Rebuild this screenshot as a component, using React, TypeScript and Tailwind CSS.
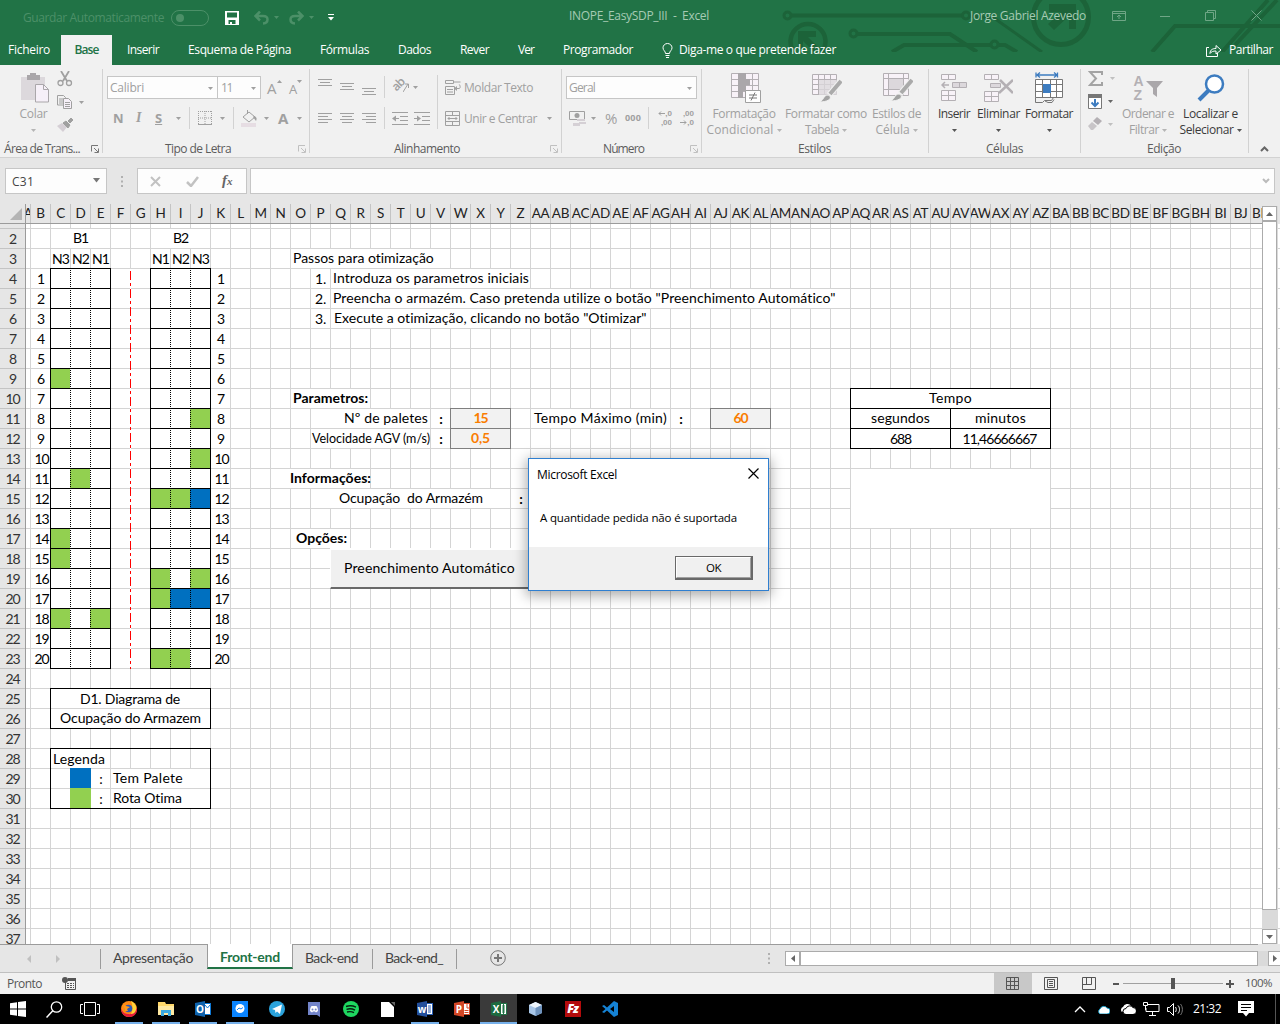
import React, { useLayoutEffect, useRef, useState, type ReactNode } from "react";

/* Text set to a given width by spreading the difference over its letters. */
function Fit({ w, t, className = "" }: { w: number; t: string; className?: string }) {
  const ref = useRef<HTMLSpanElement>(null);
  const [ls, setLs] = useState(0);
  useLayoutEffect(() => {
    if (ref.current) setLs((w - ref.current.getBoundingClientRect().width) / t.length);
  }, [w, t]);
  return (
    <span className={"block shrink-0 whitespace-pre " + className} style={{ width: w, letterSpacing: ls }}>
      <span ref={ref}>{t}</span>
    </span>
  );
}

function S({ w, h, c = "", children }: { w: number; h: number; c?: string; children: ReactNode }) {
  return (
    <svg width={w} height={h} viewBox={`0 0 ${w} ${h}`} fill="none" stroke="currentColor" className={"block shrink-0 " + c}>
      {children}
    </svg>
  );
}

const Arrow = ({ c = "" }: { c?: string }) => (
  <S w={5} h={3} c={c}><path d="M0 0h5L2.500 3z" fill="currentColor" stroke="none" /></S>
);
const Launcher = ({ c = "" }: { c?: string }) => (
  <S w={8} h={8} c={c}><path d="M.5 6.500V.5H7M3 3l4 4M7.500 3.500v4H3.500" /></S>
);
const Sep = ({ c = "" }: { c?: string }) => <div className={"w-px shrink-0 bg-[#d2d2d2] " + c} />;

/* ---------- title bar ---------- */
function TitleBar() {
  return (
    <div className="flex h-[35px] items-center text-[#a6cbb4]">
      <Fit w={141} t="Guardar Automaticamente" className="ml-[23px] text-[#4c9068]" />
      <div className="ml-[7px] flex h-4 w-[38px] items-center rounded-full border border-[#4c9068] pl-1">
        <div className="size-2 rounded-full bg-[#4c9068]" />
      </div>
      <S w={14} h={14} c="ml-4 text-white"><path d="M0 0h14v14H0zM2 1.500v5h10v-5zM3.500 9v4H5v-2h2v2h3.500V9z" fill="#fff" fillRule="evenodd" stroke="none" /></S>
      <S w={15} h={14} c="ml-[15px] text-[#4c9068]"><path d="M2 5h7c6 0 6 7 0 7.500M6 .5L1.500 5 6 9.500" strokeWidth="2.500" /></S>
      <Arrow c="ml-[5px] text-[#4c9068]" />
      <S w={15} h={14} c="ml-[10px] text-[#4c9068]"><path d="M13 5H6c-6 0-6 7 0 7.500M9 .5L13.500 5 9 9.500" strokeWidth="2.500" /></S>
      <Arrow c="ml-[5px] text-[#4c9068]" />
      <S w={6} h={7} c="ml-[14px] text-white"><path d="M0 .5h6" /><path d="M0 3h6L3 6.500z" fill="currentColor" stroke="none" /></S>
      <Fit w={140} t="INOPE_EasySDP_III  -  Excel" className="ml-[235px] -mt-[3px]" />
      <Fit w={116} t="Jorge Gabriel Azevedo" className="ml-[261px] -mt-[3px]" />
      <div className="-mt-1 flex items-center text-[#6fa686]">
        <S w={14} h={10} c="ml-[26px]"><path d="M.5.500h13v9H.5zM.5 2.500h13M7 8V4M5 6l2-2 2 2" /></S>
        <S w={10} h={10} c="ml-[34px]"><path d="M0 5.500h10" /></S>
        <S w={11} h={11} c="ml-[35px]"><path d="M.5 2.500h8v8h-8zM2.500 2.500v-2h8v8h-2" /></S>
        <S w={11} h={11} c="ml-[35px]"><path d="M.5.5l10 10M10.500.5l-10 10" /></S>
      </div>
    </div>
  );
}

function Circuit() {
  return (
    <svg width="500" height="52" viewBox="780 0 500 52" fill="none" stroke="#1c6339" strokeWidth="4" className="absolute right-0 top-0">
      <circle cx="787.500" cy="15.500" r="3.500" strokeWidth="3" /><path d="M792 15.500h170" />
      <circle cx="966" cy="15.500" r="3.500" strokeWidth="3" /><path d="M994 18l48 34M970 16l24 2" strokeWidth="3" />
      <path d="M794 52a17.500 17.500 0 1 1 28 0" strokeWidth="4.500" />
      <path d="M798 31h18v6h-8l10 10-4 5-11-11v8h-5z" fill="#1c6339" stroke="none" />
      <circle cx="853.500" cy="33.500" r="3.500" strokeWidth="3" /><path d="M858 34h92l27 18" />
      <path d="M892 52l12-7h86M999 45h6l12 7" /><circle cx="994.500" cy="44.500" r="3.500" strokeWidth="3" />
      <circle cx="1061" cy="17" r="27.500" strokeWidth="5" />
      <path d="M1049 4h27v25h-7V16l-15 14-6-6 13-12h-12z" fill="#1c6339" stroke="none" />
      <path d="M1152 52l23-26h105M1222 52l46-52M1235 45l42-45" />
    </svg>
  );
}

function TabBar() {
  const tabs: [string, number, number][] = [
    ["Inserir", 32, 15], ["Esquema de Página", 103, 29], ["Fórmulas", 49, 29], ["Dados", 33, 29],
    ["Rever", 29, 29], ["Ver", 16, 29], ["Programador", 70, 29],
  ];
  return (
    <div className="flex h-[30px] items-center text-white">
      <Fit w={42} t="Ficheiro" className="ml-2" />
      <div className="ml-[11px] flex h-full w-[51px] items-center justify-center bg-[#f1f1f1] text-[#217346]">
        <Fit w={24} t="Base" className="font-semibold" />
      </div>
      {tabs.map(([t, w, m]) => (
        <span key={t} style={{ marginLeft: m }}><Fit w={w} t={t} /></span>
      ))}
      <S w={11} h={15} c="ml-[29px]"><path d="M3.500 10.500C3.500 8 1 7.500 1 4.800a4.500 4.300 0 0 1 9 0c0 2.700-2.500 3.200-2.500 5.700zM3.500 12.500h4M4 14.500h3" /></S>
      <Fit w={157} t="Diga-me o que pretende fazer" className="ml-[6px]" />
      <S w={16} h={13} c="ml-[370px]"><path d="M3 3.500H.5v9h11V9M4 9.500c0-4 3-5 6-5V1.500L15 6l-5 4V7C7 7 5.500 7.500 4 9.500z" /></S>
      <Fit w={44} t="Partilhar" className="ml-[7px]" />
    </div>
  );
}

/* ---------- ribbon ---------- */
function Group({ w, label, lw, ml, launcher, children }: { w: number; label: string; lw: number; ml: number; launcher?: string; children: ReactNode }) {
  return (
    <div className="relative flex shrink-0 flex-col" style={{ width: w }}>
      <div className="flex h-[76px]">{children}</div>
      <div className="flex h-[17px] items-center text-[#5c5c5c]">
        <span style={{ marginLeft: ml }}><Fit w={lw} t={label} /></span>
        {launcher && <Launcher c={"mr-1 ml-auto " + launcher} />}
      </div>
      <Sep c="absolute right-0 top-1 h-[84px]" />
    </div>
  );
}
function Big({ w, icon, lines, on, ml = "" }: { w: number; icon: ReactNode; lines: [string, number][]; on?: boolean; ml?: string }) {
  return (
    <div className={"flex shrink-0 flex-col items-center " + ml + (on ? " text-[#3b3b3b]" : " text-[#a0a0a0]")} style={{ width: w }}>
      <div className="flex h-[41px] w-full items-center justify-center pt-1">{icon}</div>
      <div className="flex h-4 items-center"><Fit w={lines[0][1]} t={lines[0][0]} /></div>
      <div className="flex h-4 items-center gap-[3px]">
        {lines[1] && <Fit w={lines[1][1]} t={lines[1][0]} />}
        <Arrow c={on ? "text-[#555]" : "text-[#b5b5b5]"} />
      </div>
    </div>
  );
}
const Lines = ({ ws, c = "", a = "c" }: { ws: number[]; c?: string; a?: "l" | "c" | "r" }) => (
  <S w={14} h={ws.length * 3 - 1} c={c}>
    {ws.map((x, i) => <path key={i} d={`M${a === "l" ? 0 : a === "r" ? 14 - x : (14 - x) / 2} ${i * 3 + 0.5}h${x}`} />)}
  </S>
);

function Ribbon() {
  return (
    <div className="flex h-[93px] border-b border-[#d2d2d2] bg-[#f1f1f1] text-[#a0a0a0]">
      <Group w={103} label="Área de Trans..." lw={76} ml={4} launcher="text-[#777]">
        <Big w={47} ml="ml-[10px]" lines={[["Colar", 28]]} icon={
          <S w={28} h={30} c="ml-[3px]"><path d="M0 4h24v23H0z" fill="#dcd8dc" stroke="none" /><path d="M6 2h3V0h6v2h4v5H6z" fill="#a9a6a9" stroke="none" /><path d="M14.500 11.500h8l5 5v12.500h-13z" fill="#f6f0f8" stroke="#aaa7aa" /><path d="M22.500 11.500v5h5" stroke="#aaa7aa" /></S>} />
        <div className="flex flex-col pt-[6px]">
          <S w={16} h={16}><path d="M4 0l6 10M12 0L6 10" strokeWidth="1.800" /><circle cx="3.500" cy="12" r="2.500" strokeWidth="1.300" /><circle cx="12" cy="12" r="2.500" strokeWidth="1.300" /></S>
          <div className="mt-2 flex items-center">
            <S w={16} h={14}><path d="M.5.500h6l2 2V10h-8zM2 4h4M2 6h4M2 8h4" /><path d="M6.500 3.500h5l3 3v7h-8z" fill="#f6f0f8" /><path d="M8 7.500h5M8 9.500h5M8 11.500h5" /></S>
            <Arrow c="ml-[6px]" />
          </div>
          <S w={16} h={15} c="mt-[8px]"><path d="M0 9l5-3 5 4-4 5z" fill="#d5cfd5" stroke="none" /><path d="M6 6l3-2 4 4-2 3zM11 4l3-3 2 2-3 3z" fill="currentColor" /></S>
        </div>
      </Group>

      <Group w={207} label="Tipo de Letra" lw={66} ml={62} launcher="text-[#c0c0c0]">
        <div className="flex flex-col">
          <div className="flex h-[34px] pl-1 pt-[11px]">
            <div className="flex h-[23px] w-[111px] items-center justify-between border border-[#c6c6c6] bg-[#fdfdfd] pl-0.5 pr-1 pt-px"><Fit w={34} t="Calibri" /><Arrow /></div>
            <div className="-ml-px flex h-[23px] w-[44px] items-center justify-between border border-[#c6c6c6] bg-[#fdfdfd] pl-[3px] pr-1 pt-px"><Fit w={11} t="11" /><Arrow /></div>
            <span className="ml-[6px] w-[10px] text-[15px] leading-6">A</span><S w={5} h={3} c="mt-1"><path d="M0 3h5L2.500 0z" fill="currentColor" stroke="none" /></S>
            <span className="ml-[7px] w-[8px] text-[13px] leading-[26px]">A</span><Arrow c="mt-1" />
          </div>
          <div className="mt-[8px] flex h-[22px] items-center pl-[10px] font-bold">
            <span className="w-[11px] text-[13px]">N</span>
            <span className="ml-[12px] w-[8px] font-[Liberation_Serif] text-[14px] italic">I</span>
            <span className="ml-[11px] w-[9px] text-[13px] underline">S</span>
            <Arrow c="ml-[12px]" /><Sep c="ml-[8px] h-[22px]" />
            <S w={14} h={14} c="ml-[8px]"><path d="M.5 0v13M7 0v13M13.500 0v13M0 .5h14M0 7h14" strokeDasharray="1 1" /><path d="M0 13.500h14" /></S>
            <Arrow c="ml-[8px]" /><Sep c="ml-[8px] h-[22px]" />
            <S w={17} h={17} c="ml-[7px]"><path d="M0 13h15v4H0z" fill="#e6dde3" stroke="none" /><path d="M8 2l6 5-6 5-6-5zM6.500 0v4" /><path d="M13 6c3 1 3 3 2 5l-3-4z" fill="currentColor" stroke="none" /></S>
            <Arrow c="ml-[6px]" />
            <span className="ml-[9px] w-[12px] text-[15px]">A</span><Arrow c="ml-[7px]" />
          </div>
        </div>
      </Group>

      <Group w={252} label="Alinhamento" lw={66} ml={84} launcher="text-[#c0c0c0]">
        <div className="flex flex-col">
          <div className="mt-[11px] flex h-[22px] pl-2">
            <Lines ws={[14, 10, 14]} c="mt-[3px]" /><Lines ws={[14, 10, 14]} c="ml-2 mt-[7px]" /><Lines ws={[14, 10, 14]} c="ml-2 mt-3" />
            <Sep c="ml-[8px]" />
            <span className="ml-[7px] mt-[1px] h-4 w-[11px] -rotate-45 text-[12px] font-semibold leading-4 tracking-[-1px]">ab</span>
            <S w={6} h={14} c="mt-[4px]"><path d="M0 12L5 4M2 4h3.500v4" /></S>
            <Arrow c="ml-[4px] mt-[10px]" />
          </div>
          <div className="mt-[9px] flex h-[22px] items-center pl-2">
            <Lines ws={[14, 10, 14, 10]} a="l" /><Lines ws={[14, 10, 14, 10]} c="ml-2" /><Lines ws={[14, 10, 14, 10]} a="r" c="ml-2" />
            <Sep c="ml-[8px] h-[22px]" />
            <S w={16} h={13} c="ml-[7px]"><path d="M0 .5h16M8 4.500h8M8 8.500h8M0 12.500h16M1 6.500h6" /><path d="M4 3.500v6L0 6.500z" fill="currentColor" stroke="none" /></S>
            <S w={16} h={13} c="ml-[6px]"><path d="M0 .5h16M8 4.500h8M8 8.500h8M0 12.500h16M0 6.500h6" /><path d="M3 3.500v6l4-3z" fill="currentColor" stroke="none" /></S>
          </div>
        </div>
        <Sep c="ml-[7px] mt-[10px] h-[54px]" />
        <div className="flex flex-col pl-[7px] pt-[11px]">
          <div className="flex h-[22px] items-center gap-[3px]">
            <S w={16} h={15}><path d="M.5.500h8v3h-8zM.5 6.500h9v8h-9zM2 9.500h6M2 12h6M8.500 2h7M11 8.500h3c2 0 1-4 0-4" /><path d="M12 6v5l-3-2.500z" fill="currentColor" stroke="none" /></S>
            <Fit w={69} t="Moldar Texto" className="pt-0.5" />
          </div>
          <div className="mt-[9px] flex h-[22px] items-center">
            <S w={15} h={15}><path d="M.5.500h14v14H.5zM.5 4.500h14M.5 10.500h14M7.500.5v4M7.500 10.500v4M3 7.500h9M4.500 6L3 7.500 4.500 9M10.500 6L12 7.500 10.500 9" /></S>
            <Fit w={73} t="Unir e Centrar" className="ml-1 pt-0.5" />
            <Arrow c="ml-[10px]" />
          </div>
        </div>
      </Group>

      <Group w={140} label="Número" lw={41} ml={41} launcher="text-[#c0c0c0]">
        <div className="flex flex-col pl-1 pt-[11px]">
          <div className="flex h-[23px] w-[131px] items-center justify-between border border-[#c6c6c6] bg-[#fdfdfd] pl-0.5 pr-1 pt-px"><Fit w={26} t="Geral" /><Arrow /></div>
          <div className="mt-[8px] flex h-[22px] items-center pl-[3px]">
            <S w={17} h={15}><path d="M.5.500h15v8H.5z" /><circle cx="8" cy="4.500" r="2.500" fill="currentColor" stroke="none" /><path d="M8 8h8v2H8zM10 11h7v2h-7zM4 12h7v3H4z" fill="#d5d0d5" stroke="none" /></S>
            <Arrow c="ml-[5px]" />
            <Fit w={12} t="%" className="ml-[9px] text-[15px]" />
            <Fit w={16} t="000" className="ml-[8px] text-[9px] font-bold" />
            <Sep c="ml-[7px] h-[22px]" />
            <div className="ml-[7px] w-[16px] font-[Liberation_Sans] text-[8px] font-bold leading-[9px]">
              <div className="flex items-center justify-end"><S w={7} h={5}><path d="M7 2.500H1M3 .5l-2 2 2 2" /></S>,0</div><div className="text-right">,00</div>
            </div>
            <div className="ml-[6px] w-[16px] font-[Liberation_Sans] text-[8px] font-bold leading-[9px]">
              <div className="text-right">,00</div><div className="flex items-center justify-end"><S w={7} h={5}><path d="M0 2.500h6M4 .5l2 2-2 2" /></S>,0</div>
            </div>
          </div>
        </div>
      </Group>

      <Group w={227} label="Estilos" lw={33} ml={96}>
        <Big w={84} ml="" lines={[["Formatação", 63], ["Condicional", 67]]} icon={
          <S w={30} h={30} c="ml-[3px]"><path d="M.5.500h27v24H.5zM.5 6.500h27M.5 12.500h27M.5 18.500h27M7.500.5v24M14.500.5v24M21.500.5v24" fill="#f8f2f8" stroke="#b4b0b4" /><path d="M7 0h8v6H7zM7 6h12v6H7zM7 12h8v6H7zM7 18h5v7H7z" fill="#aaa7aa" stroke="none" /><path d="M14.500 17.500h15v12h-15z" fill="#fff" /><path d="M18 22h8M18 25h8M24 19.500l-4 8" stroke="#777" /></S>} />
        <Big w={80} lines={[["Formatar como", 82], ["Tabela", 34]]} icon={
          <S w={30} h={28} c="ml-0.5"><path d="M.5.500h24v20H.5zM.5 5.500h24M.5 10.500h24M.5 15.500h24M6.500.5v20M12.500.5v20M18.500.5v20" fill="#f8f2f8" stroke="#b4b0b4" /><path d="M7 6h18v15H7z" fill="#dcd8dc" stroke="none" opacity=".8" /><path d="M29 7L17 21" stroke="#f1f1f1" strokeWidth="6" /><path d="M29 7L18 20" stroke="#aaa" strokeWidth="4" /><path d="M7 28c5-1 4-7 9-7 4 1 4 7-9 7z" fill="#a3a3a3" stroke="#f1f1f1" /></S>} />
        <Big w={61} lines={[["Estilos de", 49], ["Célula", 34]]} icon={
          <S w={30} h={29} c="ml-0.5"><path d="M.5.500h25v22H.5zM.5 5.500h25M.5 16.500h25M5.500.5v22M20.500.5v22" fill="#f8f2f8" stroke="#b4b0b4" /><path d="M6 6h14v10H6z" fill="#dcd8dc" stroke="none" /><path d="M29 7L17 21" stroke="#f1f1f1" strokeWidth="6" /><path d="M29 7L18 20" stroke="#aaa" strokeWidth="4" /><path d="M7 28c5-1 4-7 9-7 4 1 4 7-9 7z" fill="#a3a3a3" stroke="#f1f1f1" /></S>} />
      </Group>

      <Group w={152} label="Células" lw={37} ml={57}>
        <Big w={42} ml="ml-1" on lines={[["Inserir", 32]]} icon={
          <S w={27} h={28} c="text-[#b4b0b4]"><path d="M.5.500h14v5H.5zM7.500.5v5M.5 16.500h14v10H.5zM7.500 16.500v10M.5 21.500h14" fill="#f8f2f8" /><path d="M11.500 8.500h14v5h-14zM18.500 8.500v5" fill="#dcd8dc" /><path d="M1 11h7M4 8l-3 3 3 3" strokeWidth="1.500" /></S>} />
        <Big w={47} on lines={[["Eliminar", 43]]} icon={
          <S w={29} h={28} c="text-[#b4b0b4]"><path d="M.5.500h14v5H.5zM7.500.5v5M.5 17.500h14v10H.5zM7.500 17.500v10M.5 22.500h14" fill="#f8f2f8" /><path d="M6.500 9.500h10v4h-10z" fill="#dcd8dc" /><path d="M16 6l13 13M29 6L15 19" strokeWidth="2.500" /></S>} />
        <Big w={54} on lines={[["Formatar", 48]]} icon={
          <S w={28} h={32}><path d="M1 .5v5M22.500.5v5M2 3h20M5 .5L2 3l3 2.500M19 .5L22 3l-3 2.500" stroke="#3d7cc0" strokeWidth="1.300" /><path d="M.5 7.500h27v18H.5zM.5 12.500h27M.5 19.500h27M7.500 7.500v18M15.500 7.500v18M21.500 7.500v18" fill="#fff" stroke="#777" /><path d="M8 12h8v9H8z" fill="#3d7cc0" stroke="none" /><path d="M.5 25.500v5h7l2-2h7l2-3M10 29l3 1.500h4l2-3" stroke="#777" /></S>} />
      </Group>

      <Group w={168} label="Edição" lw={34} ml={66}>
        <div className="flex w-[40px] flex-col pl-[7px] pt-[6px]">
          <div className="flex items-center"><S w={15} h={15}><path d="M14 4V1H2l6 6.500L2 14h12v-3" strokeWidth="2" stroke="#a3a3a3" /></S><Arrow c="ml-[7px] text-[#c0c0c0]" /></div>
          <div className="mt-[8px] flex items-center"><S w={14} h={15}><path d="M.5.500h13v14H.5z" fill="#fff" stroke="#777" /><path d="M0 0h14v4H0z" fill="#777" stroke="none" /><path d="M7 5v7M3.500 8.500L7 12l3.500-3.500" stroke="#3d7cc0" strokeWidth="2" /></S><Arrow c="ml-[6px] text-[#666]" /></div>
          <div className="mt-[8px] flex items-center"><S w={14} h={14}><path d="M0 9l4-4 5 4-4 4H3z" fill="#c8c5c8" stroke="none" /><path d="M5 4l4-4 5 4-4 4z" fill="#b4b0b4" stroke="none" /></S><Arrow c="ml-[6px] text-[#c0c0c0]" /></div>
        </div>
        <Big w={54} lines={[["Ordenar e", 52], ["Filtrar", 30]]} icon={
          <div className="flex"><div className="flex w-[12px] flex-col font-[Liberation_Sans] text-[14px] font-bold leading-[14px] text-[#b4b0b4]"><span>A</span><span>Z</span></div><S w={17} h={16} c="mt-[7px]"><path d="M0 0h17l-6 7v9l-4-3V7z" fill="#aaa7aa" stroke="none" /></S></div>} />
        <Big w={71} on lines={[["Localizar e", 55], ["Selecionar", 54]]} icon={
          <S w={28} h={28}><circle cx="17.500" cy="10" r="8.500" fill="#fff" stroke="#3d7cc0" strokeWidth="2.500" /><path d="M11.500 16.500L2 26" stroke="#3d7cc0" strokeWidth="4" /></S>} />
      </Group>
      <div className="flex flex-1 items-end justify-center pb-[5px]">
        <S w={9} h={6} c="text-[#666]"><path d="M1 5l3.500-3.500L8 5" strokeWidth="2" /></S>
      </div>
    </div>
  );
}

function FormulaBar() {
  return (
    <div className="flex h-[46px] items-start bg-[#e6e6e6] pt-[10px] pl-[5px] text-[#444]">
      <div className="flex h-[26px] w-[102px] items-center justify-between border border-[#c6c6c6] bg-[#fdfdfd] px-[6px]">
        <Fit w={22} t="C31" className="pt-px" /><S w={8} h={5} c="-mr-[1px] -mt-0.5"><path d="M0 0h7L3.500 4.500z" fill="#777" stroke="none" /></S>
      </div>
      <S w={2} h={11} c="ml-[14px] mt-[8px]"><path d="M1 0v2M1 4.500v2M1 9v2" strokeWidth="2" stroke="#b0b0b0" /></S>
      <div className="ml-[14px] flex h-[26px] w-[110px] items-center border border-[#c6c6c6] bg-[#fdfdfd]">
        <S w={11} h={11} c="ml-[12px] text-[#c2c2c2]"><path d="M1 1l9 9M10 1l-9 9" strokeWidth="2" /></S>
        <S w={13} h={11} c="ml-[25px] text-[#c2c2c2]"><path d="M1 6l4 4 7-9" strokeWidth="2.500" /></S>
        <span className="ml-[23px] -mt-px font-[Liberation_Serif] text-[15px] font-bold italic leading-4 text-[#666]">f<span className="text-[11px]">x</span></span>
      </div>
      <div className="ml-[3px] flex h-[26px] w-[1025px] items-center justify-end border border-[#c6c6c6] bg-[#fdfdfd] pr-1">
        <S w={8} h={6}><path d="M1 1l3 3 3-3" strokeWidth="2" stroke="#bbb" /></S>
      </div>
    </div>
  );
}

/* ---------- worksheet ---------- */
const colName = (i: number) => (i > 26 ? String.fromCharCode(64 + Math.floor((i - 1) / 26)) : "") + String.fromCharCode(65 + ((i - 1) % 26));
const colIndex = (s: string) => [...s].reduce((n, ch) => n * 26 + ch.charCodeAt(0) - 64, 0);

/* A block of cells from column a / row r to column b / row r2. */
function Cell({ a, b = a, r, r2 = r, className = "", children }: { a: string; b?: string; r: number; r2?: number; className?: string; children?: ReactNode }) {
  return (
    <div className={"flex min-w-0 items-center " + className} style={{ gridColumn: `${colIndex(a)} / ${colIndex(b) + 1}`, gridRow: `${r} / ${r2 + 1}` }}>
      {children}
    </div>
  );
}
const blank = "mb-px mr-px bg-white pb-px ";
const input = "-ml-px -mt-px justify-center border border-[#7f7f7f] bg-[#f2f2f2] pb-px font-bold text-[#fa7d00]";
const boxed = "-ml-px -mt-px justify-center border border-black bg-white ";

const fills: Record<string, string> = {
  C9: "g", J11: "g", J13: "g", D14: "g", H15: "g", I15: "g", J15: "b", C17: "g", C18: "g", H19: "g", J19: "g",
  H20: "g", I20: "b", J20: "b", C21: "g", E21: "g", H23: "g", I23: "g",
};

function Rack({ cols }: { cols: string[] }) {
  return (
    <>
      {Array.from({ length: 20 }, (_, i) => cols.map((c, k) => {
        const f = fills[c + (i + 4)];
        return (
          <Cell key={c + i} a={c} r={i + 4} className={
            "-mt-px -ml-px border-y border-y-black border-l border-l-black " +
            (k ? "[border-left-style:dotted] " : "") + (k === 2 ? "border-r border-r-black " : "") +
            (f === "g" ? "bg-[#92d050]" : f === "b" ? "bg-[#0070c0]" : "bg-white")} />
        );
      }))}
    </>
  );
}

function Sheet() {
  return (
    <div className="grid h-[720px] w-[1236px] shrink-0 grid-cols-[5px_repeat(63,20px)] grid-rows-[5px_repeat(36,20px)] overflow-hidden bg-white bg-[linear-gradient(to_right,#d4d4d4_1px,transparent_1px),linear-gradient(to_bottom,#d4d4d4_1px,transparent_1px)] bg-[length:20px_20px] bg-[position:4px_4px] font-[Lato] text-[14px] leading-none text-black">
      <Cell a="C" b="E" r={2} className={blank + "justify-center"}><Fit w={15} t="B1" /></Cell>
      <Cell a="H" b="J" r={2} className={blank + "justify-center"}><Fit w={15} t="B2" /></Cell>
      {[["C", "N3"], ["D", "N2"], ["E", "N1"], ["H", "N1"], ["I", "N2"], ["J", "N3"]].map(([c, t]) => (
        <Cell key={c} a={c} r={3} className="justify-center pr-px"><Fit w={17} t={t} /></Cell>
      ))}
      {["B", "K"].map((c) => Array.from({ length: 20 }, (_, i) => (
        <Cell key={c + i} a={c} r={i + 4} className={"justify-center " + (i > 8 ? "pl-px" : "pr-px")}><Fit w={i > 8 ? 14 : 7} t={String(i + 1)} /></Cell>
      )))}
      <Rack cols={["C", "D", "E"]} />
      <Rack cols={["H", "I", "J"]} />
      <Cell a="F" r={4} r2={23} className="w-px justify-self-end bg-[repeating-linear-gradient(to_bottom,#fff_0_2px,#f00_2px_11px,#fff_11px_14px,#f00_14px_17px,#fff_17px_18px)]" />

      <Cell a="C" b="J" r={25} r2={26} className="-ml-px -mt-px flex-col border border-black bg-white">
        <div className="flex h-5 w-full items-center justify-center border-b border-[#d4d4d4]"><Fit w={100} t="D1. Diagrama de" className="mr-px" /></div>
        <div className="flex h-[19px] items-center pb-px"><Fit w={141} t="Ocupação do Armazem" /></div>
      </Cell>
      <Cell a="C" b="J" r={28} r2={30} className="-ml-px -mt-px border border-black" />
      <Cell a="C" b="E" r={28} className={blank + "pl-0.5 pt-0.5"}><Fit w={52} t="Legenda" /></Cell>
      <Cell a="D" r={29} className="-ml-px -mt-px bg-[#0070c0]" />
      <Cell a="D" r={30} className="-ml-px -mt-px mb-px bg-[#92d050]" />
      <Cell a="E" r={29} className="justify-center">:</Cell>
      <Cell a="E" r={30} className="justify-center">:</Cell>
      <Cell a="F" b="J" r={29} className={blank + "pl-0.5"}><Fit w={70} t="Tem Palete" /></Cell>
      <Cell a="F" b="J" r={30} className={blank + "pl-0.5"}><Fit w={69} t="Rota Otima" /></Cell>

      <Cell a="O" b="V" r={3} className={blank + "pl-0.5"}><Fit w={141} t="Passos para otimização" /></Cell>
      {["1.", "2.", "3."].map((t, i) => <Cell key={t} a="P" r={4 + i} className="justify-end pr-[5px]"><Fit w={11} t={t} /></Cell>)}
      <Cell a="Q" b="Z" r={4} className={blank + "pl-0.5"}><Fit w={196} t="Introduza os parametros iniciais" /></Cell>
      <Cell a="Q" b="AP" r={5} className={blank + "pl-0.5"}><Fit w={503} t={'Preencha o armazém. Caso pretenda utilize o botão "Preenchimento Automático"'} /></Cell>
      <Cell a="Q" b="AF" r={6} className={blank + "pl-[3px]"}><Fit w={313} t={'Execute a otimização, clicando no botão "Otimizar"'} /></Cell>

      <Cell a="O" b="R" r={10} className={blank + "pl-0.5 font-bold"}><Fit w={75} t="Parametros:" /></Cell>
      <Cell a="P" b="U" r={11} className={blank + "justify-end pr-[2px]"}><Fit w={84} t="Nº de paletes" /></Cell>
      <Cell a="P" b="U" r={12} className="mb-px mr-px justify-end bg-white pt-0.5 text-[12.5px]"><Fit w={118} t="Velocidade AGV (m/s)" /></Cell>
      <Cell a="V" r={11} className="justify-center font-bold">:</Cell>
      <Cell a="V" r={12} className="justify-center font-bold">:</Cell>
      <Cell a="W" b="Y" r={11} className={input}><Fit w={14} t="15" /></Cell>
      <Cell a="W" b="Y" r={12} className={input}><Fit w={19} t="0,5" /></Cell>
      <Cell a="AA" b="AG" r={11} className={blank + "pl-[3px]"}><Fit w={133} t="Tempo Máximo (min)" /></Cell>
      <Cell a="AH" r={11} className="justify-center font-bold">:</Cell>
      <Cell a="AJ" b="AL" r={11} className={input}><Fit w={14} t="60" /></Cell>
      <Cell a="O" b="R" r={14} className="-ml-px mb-px mr-px bg-white pb-px font-bold"><Fit w={81} t="Informações:" /></Cell>
      <Cell a="P" b="Y" r={15} className={blank + "justify-center"}><Fit w={144} t="Ocupação  do Armazém" className="ml-px" /></Cell>
      <Cell a="Z" r={15} className="justify-center font-bold">:</Cell>
      <Cell a="O" b="Q" r={17} className={blank + "pl-[5px] font-bold"}><Fit w={51} t="Opções:" /></Cell>
      <Cell a="Q" b="AH" r={18} r2={19} className="-ml-px -mt-px border-b-2 border-l border-t-2 border-b-[#696969] border-l-white border-t-white bg-[#f0f0f0] pb-px pl-[13px]"><Fit w={171} t="Preenchimento Automático" /></Cell>

      <Cell a="AQ" b="AZ" r={10} className={boxed + "pb-px"}><Fit w={43} t="Tempo" /></Cell>
      <Cell a="AQ" b="AU" r={11} className={boxed + "pb-px"}><Fit w={59} t="segundos" /></Cell>
      <Cell a="AV" b="AZ" r={11} className={boxed + "pb-px"}><Fit w={51} t="minutos" /></Cell>
      <Cell a="AQ" b="AU" r={12} className={boxed + "pt-px"}><Fit w={21} t="688" /></Cell>
      <Cell a="AV" b="AZ" r={12} className={boxed + "pr-0.5 pt-px"}><Fit w={74} t="11,46666667" /></Cell>
      <Cell a="AQ" b="AZ" r={14} r2={16} className={blank} />
    </div>
  );
}

function Worksheet() {
  return (
    <div className="flex h-[740px] overflow-hidden bg-[#e6e6e6]">
      <div className="flex w-[26px] shrink-0 flex-col border-r border-[#9b9b9b] font-[Lato] text-[14px] leading-none text-[#333]">
        <div className="flex h-5 shrink-0 items-end justify-end border-b border-[#9b9b9b] pb-[3px] pr-[3px]">
          <S w={12} h={12}><path d="M12 0v12H0z" fill="#b4b4b4" stroke="none" /></S>
        </div>
        <div className="h-[5px] shrink-0 border-b border-[#c4c4c4]" />
        {Array.from({ length: 36 }, (_, i) => (
          <div key={i} className="flex h-5 shrink-0 items-center justify-center border-b border-[#c4c4c4] pt-px"><Fit w={i < 8 ? 7 : 14} t={String(i + 2)} /></div>
        ))}
      </div>
      <div className="flex w-[1236px] shrink-0 flex-col overflow-hidden">
        <div className="grid h-5 shrink-0 grid-cols-[5px_repeat(62,20px)] overflow-hidden border-b border-[#9b9b9b] font-[Lato] text-[13.5px] leading-none tracking-[-0.3px] text-[#222]">
          {Array.from({ length: 63 }, (_, i) => (
            <div key={i} className="flex items-center justify-center overflow-hidden border-r border-[#c4c4c4] pt-px">{colName(i + 1)}</div>
          ))}
        </div>
        <Sheet />
      </div>
      <div className="mt-[2px] flex w-4 shrink-0 flex-col bg-[#dadada] text-[#666]">
        <div className="flex h-[15px] w-[15px] items-center justify-center border border-[#ababab] bg-white"><S w={7} h={4}><path d="M0 4h7L3.500 0z" fill="currentColor" stroke="none" /></S></div>
        <div className="h-[689px] w-[15px] border border-[#ababab] bg-white" />
        <div className="mt-auto flex h-[15px] w-[15px] items-center justify-center border border-[#ababab] bg-white"><S w={7} h={4}><path d="M0 0h7L3.500 4z" fill="currentColor" stroke="none" /></S></div>
      </div>
      <div className="mt-5 flex-1 bg-white bg-[linear-gradient(to_bottom,#d4d4d4_1px,transparent_1px)] bg-[length:20px_20px] bg-[position:0_4px]" />
    </div>
  );
}

function SheetTabs() {
  return (
    <div className="flex h-[29px] border-b border-[#c0c0c0] bg-[#e6e6e6] font-[Lato] text-[14px] text-[#444]">
      <div className="flex w-[1258px] items-center border-t border-[#9b9b9b]">
        <S w={4} h={8} c="ml-[27px] text-[#c0c0c0]"><path d="M4 0v8L0 4z" fill="currentColor" stroke="none" /></S>
        <S w={4} h={8} c="ml-[25px] text-[#c0c0c0]"><path d="M0 0v8l4-4z" fill="currentColor" stroke="none" /></S>
        <div className="ml-[40px] h-5 w-px bg-[#9b9b9b]" />
        <Fit w={80} t="Apresentação" className="-mt-0.5 ml-3" />
        <div className="-mt-px ml-[14px] flex h-[25px] w-[86px] items-center justify-center self-start border-x border-b-2 border-x-[#9b9b9b] border-b-[#217346] bg-white pt-0.5 font-bold text-[#217346]"><Fit w={60} t="Front-end" /></div>
        <Fit w={53} t="Back-end" className="-mt-0.5 ml-3" />
        <div className="ml-[14px] h-5 w-px bg-[#9b9b9b]" />
        <Fit w={58} t="Back-end_" className="-mt-0.5 ml-3" />
        <div className="ml-[13px] h-5 w-px bg-[#9b9b9b]" />
        <S w={16} h={16} c="-mt-0.5 ml-[33px] text-[#777]"><circle cx="8" cy="8" r="7.300" /><path d="M8 4v8M4 8h8" strokeWidth="2" /></S>
        <S w={2} h={11} c="ml-[262px]"><path d="M1 0v2M1 4.500v2M1 9v2" strokeWidth="2" stroke="#b0b0b0" /></S>
        <div className="ml-[15px] flex h-[15px] w-[15px] items-center justify-center border border-[#ababab] bg-white"><S w={4} h={7}><path d="M4 0v7L0 3.500z" fill="#666" stroke="none" /></S></div>
        <div className="h-[15px] flex-1 border border-[#ababab] bg-white" />
      </div>
      <div className="mt-[7px] flex h-[15px] flex-1 justify-end bg-[#dadada]">
        <div className="flex w-3 items-center justify-center border border-r-0 border-[#ababab] bg-white"><S w={4} h={7}><path d="M0 0v7l4-3.500z" fill="#666" stroke="none" /></S></div>
      </div>
    </div>
  );
}

function StatusBar() {
  return (
    <div className="flex h-[21px] items-center bg-[#f1f1f1] text-[#555]">
      <Fit w={35} t="Pronto" className="ml-[7px]" />
      <S w={14} h={13} c="-mt-px ml-5"><path d="M3.500 5v7.500h10V3" /><path d="M6 1h8v3H6z" fill="currentColor" stroke="none" /><circle cx="3" cy="3" r="3" fill="currentColor" stroke="none" /><path d="M5 6.500h7M5 8.500h7M5 10.500h7" strokeDasharray="2 1" /></S>
      <div className="ml-[918px] flex h-full w-[38px] items-center justify-center bg-[#c8c8c8] pr-px">
        <S w={13} h={13}><path d="M.5.500h12v12H.5zM.5 4.500h12M.5 8.500h12M4.500.5v12M8.500.5v12" /></S>
      </div>
      <S w={14} h={13} c="ml-3"><path d="M.5.500h13v12H.5zM3.500 2.500h7v8h-7zM5 4.500h4M5 6.500h4M5 8.500h4" /></S>
      <S w={14} h={13} c="ml-6"><path d="M.5.500h13v12H.5zM4.500.5v7M9.500.5v7M.5 7.500h9" /></S>
      <div className="ml-[17px] h-0.5 w-[6px] bg-[#555]" />
      <div className="ml-1 flex w-[100px] items-center"><div className="h-px flex-1 bg-[#a0a0a0]" /><div className="h-[11px] w-1 bg-[#555]" /><div className="h-px flex-1 bg-[#a0a0a0]" /></div>
      <S w={8} h={8} c="ml-[3px]"><path d="M4 0v8M0 4h8" strokeWidth="2" /></S>
      <Fit w={27} t="100%" className="-mt-px ml-[11px] text-[11.5px]" />
    </div>
  );
}

/* ---------- taskbar ---------- */
function Office({ c, d, l, page }: { c: string; d: string; l: string; page: ReactNode }) {
  return (
    <svg width="16" height="16" viewBox="0 0 16 16" className="block">
      <path d="M9 2h7v12H9z" fill={c} /><path d="M10 3h5v10h-5z" fill="#fff" />{page}
      <path d="M0 2l10-2v16L0 14z" fill={d} />
      <text x="5" y="11.800" textAnchor="middle" fill="#fff" className="font-[Open_Sans] text-[10px] font-bold">{l}</text>
    </svg>
  );
}
function Taskbar() {
  const rows = (c: string) => <path d="M11 5h3M11 7h3M11 9h3M11 11h3" stroke={c} />;
  const apps: [ReactNode, boolean][] = [
    [<S w={16} h={16}><circle cx="8" cy="8" r="8" fill="#ff8a15" stroke="none" /><path d="M0 7c0 6 4 9 8 9 6 0 9-5 8-10-1 4-5 8-9 7-4 0-6-3-7-6z" fill="#e31b3d" stroke="none" /><path d="M10 0c4 2 6 5 5 9-1 3-3 4-5 4 2-4 2-8 0-13z" fill="#ffd43a" stroke="none" /><circle cx="7.500" cy="7.500" r="3.800" fill="#2b58b8" stroke="none" /><path d="M2 3l3 2 4 1-3 2 1 2H4z" fill="#ff9a1a" stroke="none" /></S>, true],
    [<S w={16} h={14}><path d="M0 0h7l1 2h8v11H0z" fill="#ffd86b" stroke="none" /><path d="M0 4h16v9H0z" fill="#ffe9a2" stroke="none" /><path d="M3 14V8h10v6h-3v-3H6v3z" fill="#39a9e0" stroke="none" /></S>, true],
    [<Office c="#0f78d4" d="#0f62ac" l="O" page={<path d="M10 4l2.500 3L15 4" stroke="#0f78d4" fill="none" />} />, true],
    [<div className="flex size-4 items-center justify-center bg-[#0a84ff]"><S w={10} h={10}><circle cx="5" cy="4.500" r="4.500" fill="#fff" stroke="none" /><path d="M2 6l2-2 2 1 2-1.500" stroke="#0a84ff" /></S></div>, true],
    [<S w={16} h={16}><circle cx="8" cy="8" r="8" fill="#2ba3dc" stroke="none" /><path d="M3 8l10-4.500L11 13 8 10.500 6.500 12 6 9z" fill="#fff" stroke="none" /></S>, false],
    [<S w={14} h={15}><path d="M1 0h12v15l-3-2H1z" fill="#7284c9" stroke="none" /><path d="M3 9c0-3 1-5 2-5h4c1 0 2 2 2 5l-2 1.500-1-1H6l-1 1z" fill="#fff" stroke="none" /><circle cx="5.500" cy="7.500" r="1" fill="#7284c9" stroke="none" /><circle cx="8.700" cy="7.500" r="1" fill="#7284c9" stroke="none" /></S>, false],
    [<S w={16} h={16}><circle cx="8" cy="8" r="8" fill="#1ed760" stroke="none" /><path d="M3 5.500c4-1.300 7-.8 10 .7M3.500 8.300c3-1 6-.6 8.500.8M4 11c3-.8 5-.4 7 .6" stroke="#05200e" strokeWidth="1.400" /></S>, false],
    [<S w={14} h={15}><path d="M0 0h8l5 5v10H0z" fill="#fff" stroke="none" /><path d="M10 0h4v4z" fill="#666" stroke="none" /></S>, false],
    [<Office c="#2b5fb4" d="#234f9c" l="w" page={rows("#2b5fb4")} />, true],
    [<Office c="#d24625" d="#d24625" l="P" page={<path d="M13 3v4h2M10.500 9.500h4M10.500 11.500h4" stroke="#d24625" fill="none" />} />, false],
    [<Office c="#217346" d="#1d6b40" l="X" page={<path d="M11 5h3M11 7h3M11 9h3M11 11h3M12.500 3v10" stroke="#217346" />} />, true],
    [<S w={13} h={14}><path d="M6.500 0L13 3v8l-6.500 3L0 11V3z" fill="#a9c7e8" stroke="none" /><path d="M6.500 0L13 3 6.500 6 0 3z" fill="#eef5fc" stroke="none" /><path d="M6.500 6L13 3v8l-6.500 3z" fill="#6f93bd" stroke="none" /></S>, false],
    [<div className="flex size-4 items-center justify-center bg-[#b30b0b] text-[12px] font-extrabold italic leading-4 tracking-[-1px] text-white">Fz</div>, false],
    [<S w={16} h={16}><path d="M12 0l4 2v12l-4 2-7-6.500L2 12 0 11l3.500-3L0 5l2-1 3 2.500zM12 5L8 8l4 3z" fill="#1582d4" stroke="none" fillRule="evenodd" /></S>, false],
  ];
  return (
    <div className="flex h-[30px] items-center bg-black text-white">
      <S w={16} h={16} c="ml-[10px]"><path d="M0 2.300l7-1v6.200H0zM8 1.100L16 0v7.500H8zM0 8.500h7v6.200l-7-1zM8 8.500h8V16l-8-1.100z" fill="#fff" stroke="none" /></S>
      <S w={17} h={17} c="ml-5"><circle cx="10.500" cy="6" r="5.200" strokeWidth="1.300" /><path d="M6.800 9.800L.5 16.500" strokeWidth="1.500" /></S>
      <S w={20} h={14} c="ml-[17px]"><path d="M4.500.5h11v13h-11zM3 2.500H.5v9H3M17 2.500h2.500v9H17" /></S>
      <div className="ml-[10px] flex h-full">
        {apps.map(([icon, open], i) => (
          <div key={i} className={"flex h-full w-[37px] flex-col items-center " + (i === 10 ? "bg-[#3a3a3a]" : "")}>
            <div className="flex h-7 items-center pt-0.5">{icon}</div>
            {open && <div className={"h-0.5 bg-[#76b0ea] " + (i === 10 ? "w-full" : "w-7")} />}
          </div>
        ))}
      </div>
      <S w={12} h={7} c="ml-[446px]"><path d="M1 6l5-5 5 5" strokeWidth="1.300" /></S>
      <S w={13} h={9} c="ml-[11px]"><path d="M3 9a3 3 0 0 1 0-5 4 4 0 0 1 7-1 3 3 0 0 1 0 6z" fill="#fff" stroke="#1a9bc4" /></S>
      <S w={16} h={10} c="ml-[10px]"><path d="M2 8a3 3 0 0 1 1-5 4.500 4.500 0 0 1 8-1L6 5z" fill="#fff" stroke="none" /><path d="M6 10.500a3 3 0 0 1 0-6 4 4 0 0 1 7-1 3 3 0 0 1 0 7z" fill="#fff" stroke="#000" /></S>
      <S w={17} h={14} c="ml-[7px]"><path d="M5 2.500h11v7H3V6M9.500 9.500v4M6 13.500h7M.5.500h4v3h-4zM2.500 3.500V8" /></S>
      <S w={16} h={13} c="ml-[7px]"><path d="M.5 4.500h2l4-4v12l-4-4h-2zM8.500 4c1 1.500 1 3.500 0 5M11 2.500c2 2 2 6 0 8" /><path d="M13.500 1c2.500 3 2.500 8 0 11" stroke="#777" /></S>
      <Fit w={28} t="21:32" className="ml-[10px]" />
      <S w={16} h={16} c="ml-[17px]"><path d="M0 0h16v12h-5l-3 3.500L5 12H0z" fill="#fff" stroke="none" /><path d="M3 3.500h10M3 6.500h10M3 9.500h6" stroke="#000" /></S>
      <div className="ml-auto mr-1 h-full w-px bg-[#555]" />
    </div>
  );
}

function Dialog() {
  return (
    <div className="absolute left-[528px] top-[458px] flex h-[133px] w-[241px] flex-col border border-[#2f7fd0] bg-white text-black shadow-[0_3px_12px_2px_rgba(0,0,0,0.32)]">
      <div className="flex h-[30px] items-center justify-between pl-2 pr-[9px]">
        <Fit w={80} t="Microsoft Excel" className="pt-px" />
        <S w={11} h={11} c="-mt-px"><path d="M.5.500l10 10M10.500.5l-10 10" strokeWidth="1.200" /></S>
      </div>
      <div className="flex flex-1 items-center pl-[11px]"><Fit w={197} t="A quantidade pedida não é suportada" className="text-[11.500px]" /></div>
      <div className="flex h-[43px] justify-end bg-[#f0f0f0] pr-[15px] pt-[9px]">
        <div className="flex h-[24px] w-[78px] items-center justify-center border border-b-2 border-r-2 border-[#696969]">
          <div className="flex h-full w-full items-center justify-center border border-white border-b-[#a0a0a0] border-r-[#a0a0a0]"><Fit w={15} t="OK" className="text-[11.500px]" /></div>
        </div>
      </div>
    </div>
  );
}

export default function App() {
  return (
    <div className="relative flex h-[1024px] w-[1280px] flex-col overflow-hidden font-['Open_Sans'] text-[12px] leading-4">
      <div className="relative bg-[#217346]">
        <Circuit />
        <div className="relative"><TitleBar /><TabBar /></div>
      </div>
      <Ribbon />
      <FormulaBar />
      <Worksheet />
      <SheetTabs />
      <StatusBar />
      <Taskbar />
      <Dialog />
    </div>
  );
}
